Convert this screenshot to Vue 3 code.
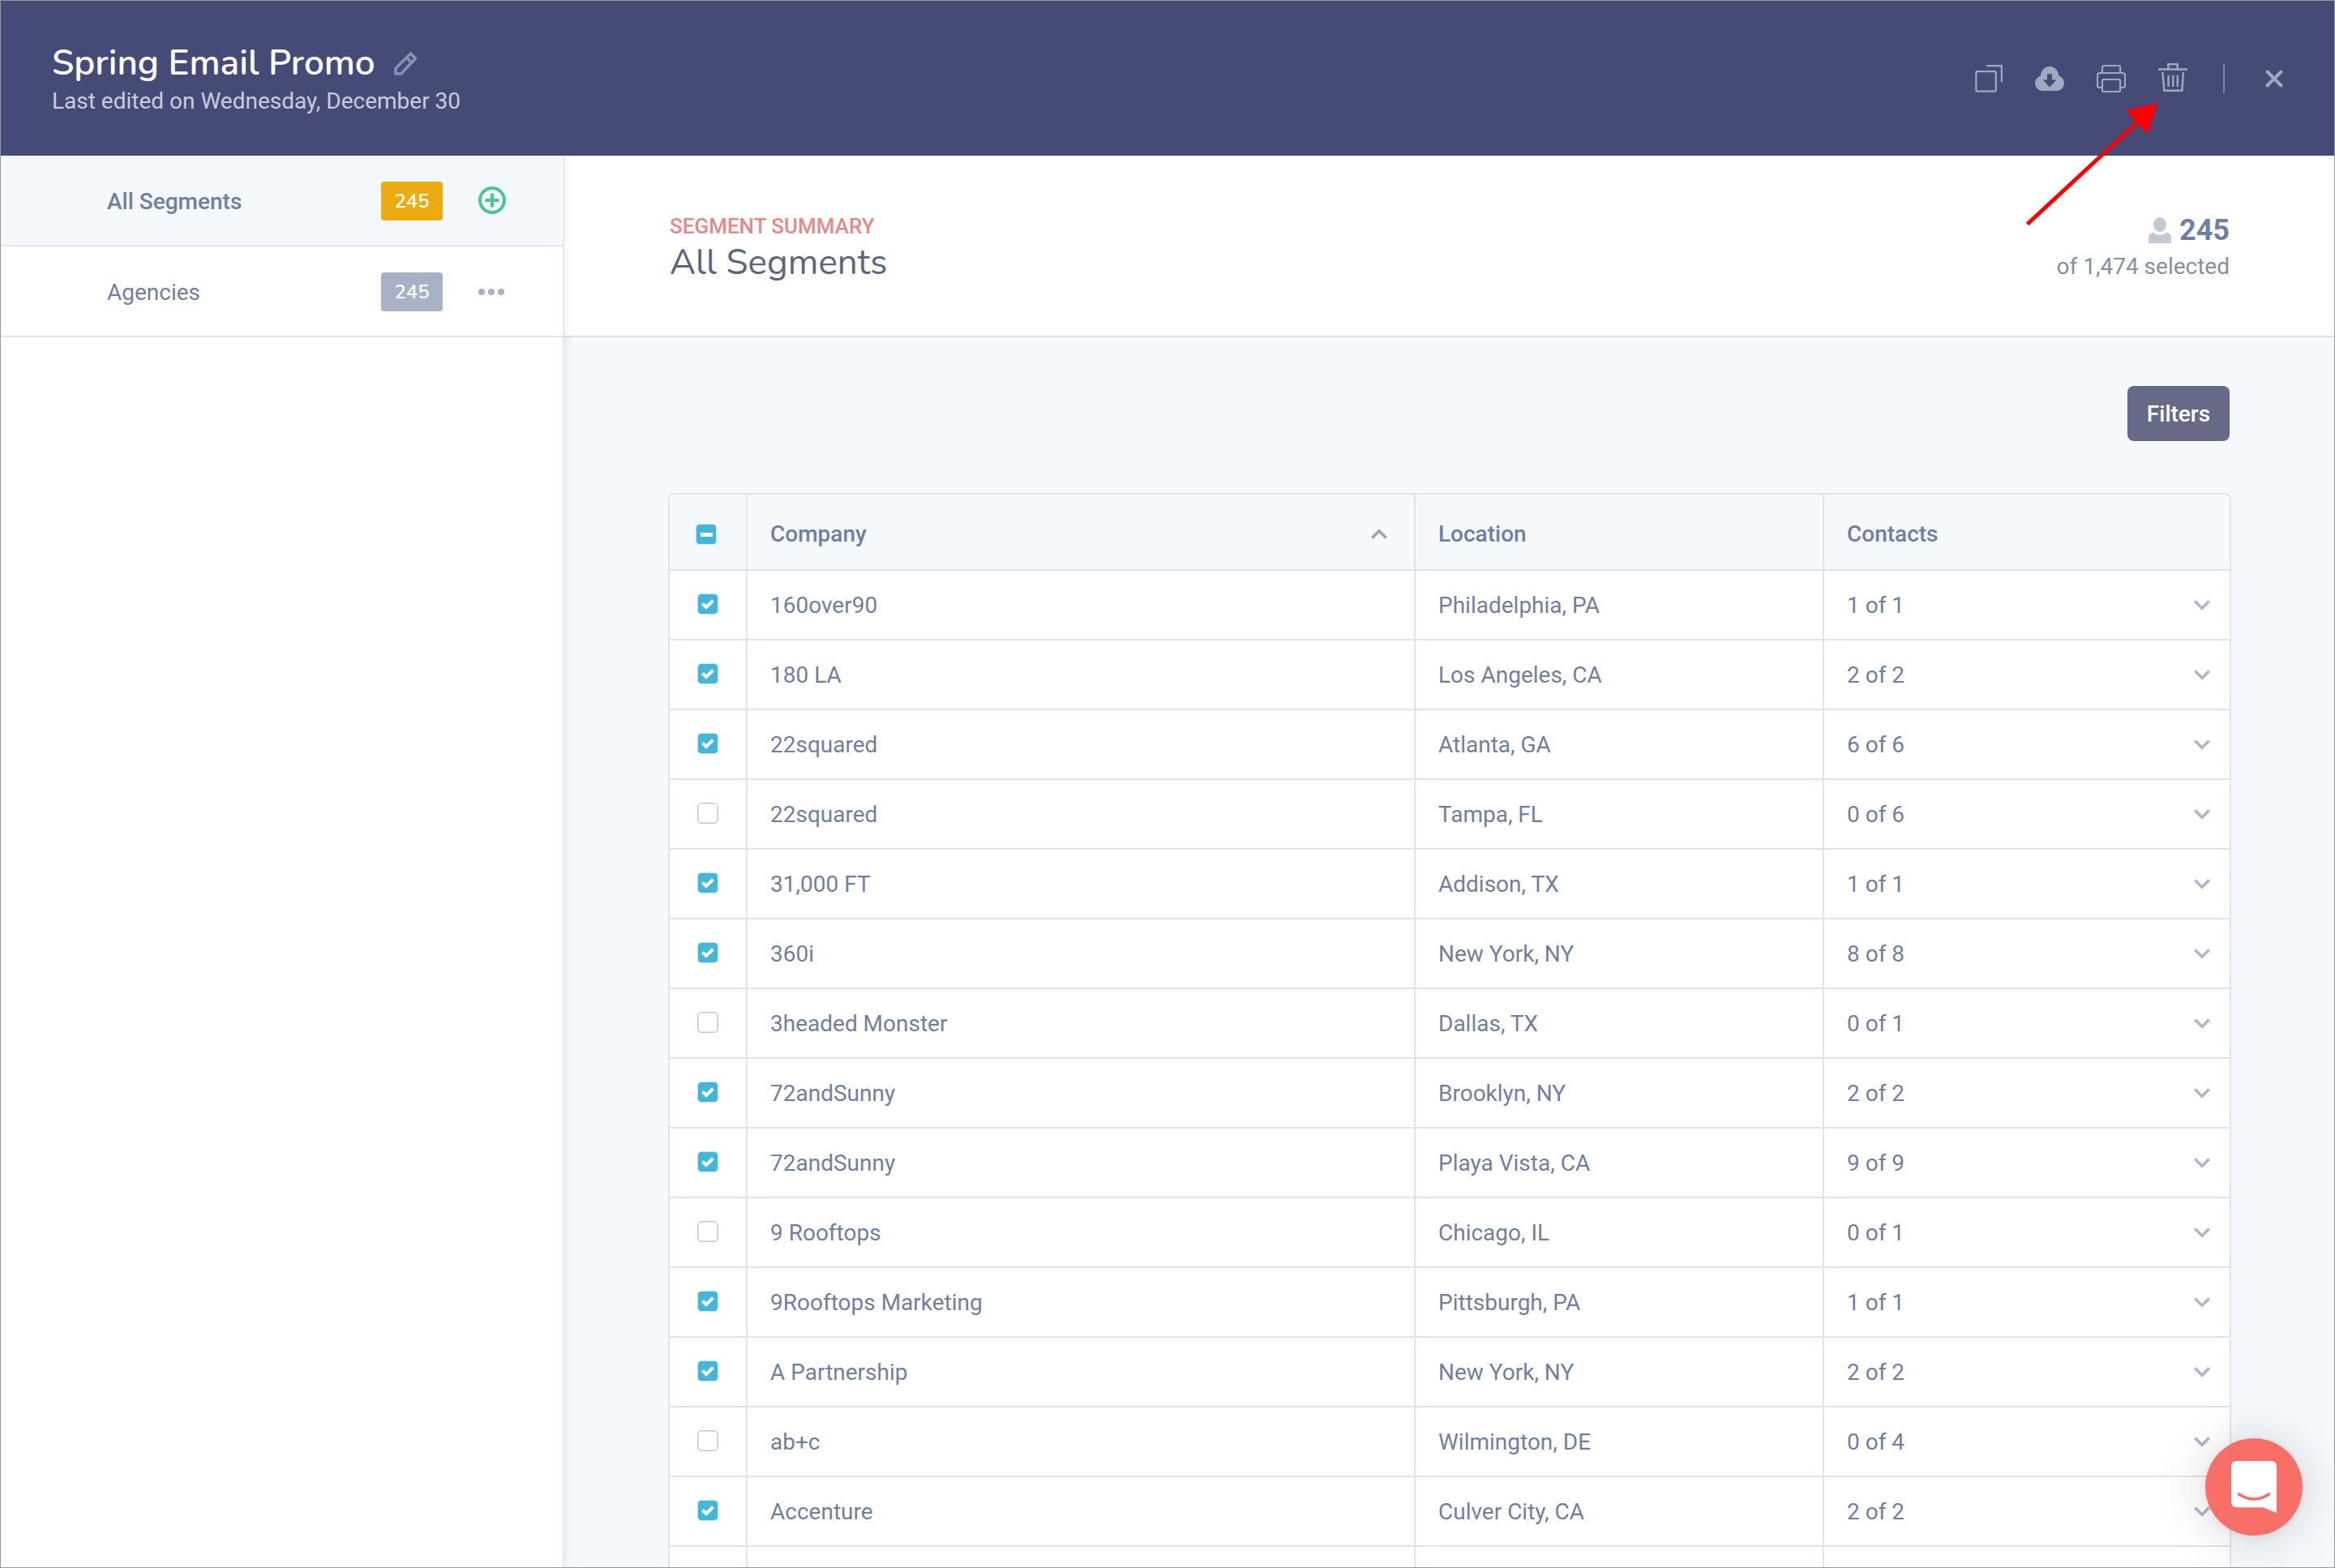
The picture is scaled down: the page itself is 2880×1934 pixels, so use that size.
<script setup>
const rows = [
  { on: true, company: '160over90', location: 'Philadelphia, PA', contacts: '1 of 1' },
  { on: true, company: '180 LA', location: 'Los Angeles, CA', contacts: '2 of 2' },
  { on: true, company: '22squared', location: 'Atlanta, GA', contacts: '6 of 6' },
  { on: false, company: '22squared', location: 'Tampa, FL', contacts: '0 of 6' },
  { on: true, company: '31,000 FT', location: 'Addison, TX', contacts: '1 of 1' },
  { on: true, company: '360i', location: 'New York, NY', contacts: '8 of 8' },
  { on: false, company: '3headed Monster', location: 'Dallas, TX', contacts: '0 of 1' },
  { on: true, company: '72andSunny', location: 'Brooklyn, NY', contacts: '2 of 2' },
  { on: true, company: '72andSunny', location: 'Playa Vista, CA', contacts: '9 of 9' },
  { on: false, company: '9 Rooftops', location: 'Chicago, IL', contacts: '0 of 1' },
  { on: true, company: '9Rooftops Marketing', location: 'Pittsburgh, PA', contacts: '1 of 1' },
  { on: true, company: 'A Partnership', location: 'New York, NY', contacts: '2 of 2' },
  { on: false, company: 'ab+c', location: 'Wilmington, DE', contacts: '0 of 4' },
  { on: true, company: 'Accenture', location: 'Culver City, CA', contacts: '2 of 2' },
]
</script>

<template>
  <div class="app">
    <header class="topbar">
      <div class="heading">
        <div class="title-row">
          <h1>Spring Email Promo</h1>
          <svg class="pencil" width="30" height="30" viewBox="0 0 30 30" fill="none" stroke="#8791b1" stroke-width="3.600" stroke-linejoin="round">
            <path d="M2 28V21.300L20.500 3L26.500 9L8.700 28ZM15.500 8L21.500 14" />
          </svg>
        </div>
        <p class="edited">Last edited on Wednesday, December 30</p>
      </div>
      <div class="tools">
        <svg width="34" height="36" viewBox="0 0 34 36" fill="none" stroke="#a0a9c0" stroke-width="2.200" stroke-linejoin="round" stroke-linecap="round">
          <rect x="1.400" y="9.200" width="24.400" height="24.400" rx="1" />
          <path d="M14.800 2.200H32.900V21.600" />
        </svg>
        <svg width="36" height="36" viewBox="0 0 36 36">
          <path fill="#a0a9c0" d="M9 33A9 9 0 0 1 0 24C0 19.500 3 15.500 7 14.500A11 11.500 0 0 1 29 14.500C33 15.500 36 19.500 36 24A9 9 0 0 1 27 33Z" />
          <path fill="#454b76" d="M15 12.300H21V19.500H26.300L18 28.500L9.700 19.500H15Z" />
        </svg>
        <svg width="36" height="36" viewBox="0 0 36 36" fill="none" stroke="#a0a9c0" stroke-width="2.100" stroke-linejoin="round">
          <path d="M7 10V4Q7 2 9 2H27Q29 2 29 4V10" />
          <path d="M7 29H3Q1 29 1 27V14Q1 11 4 11H32Q35 11 35 14V27Q35 29 33 29H29" />
          <rect x="7" y="19" width="22" height="15" rx="1.500" />
        </svg>
        <svg class="trash" width="36" height="36" viewBox="0 0 36 36" fill="none" stroke="#a0a9c0" stroke-width="2.400">
          <path d="M0 6.500H36M12.300 6V0.200H23.700V6M5.400 10L7.300 32.800H29.400L30.900 10M12.600 13.700V28M18.200 13.700V28M23.800 13.700V28" />
        </svg>
        <span class="rule"></span>
        <svg class="close" width="22" height="22" viewBox="0 0 22 22" stroke="#a0a9c0" stroke-width="4" stroke-linecap="round">
          <path d="M2.500 2.500L19.500 19.500M19.500 2.500L2.500 19.500" />
        </svg>
      </div>
    </header>

    <div class="body">
      <aside class="sidebar">
        <div class="segment active">
          <span class="segment-name">All Segments</span>
          <span class="badge gold">245</span>
          <svg class="action plus" width="34" height="34" viewBox="0 0 34 34" fill="none" stroke="#48c78e" stroke-width="4">
            <circle cx="17" cy="17" r="15" />
            <path d="M8.500 17H25.500M17 8.500V25.500" />
          </svg>
        </div>
        <div class="segment">
          <span class="segment-name">Agencies</span>
          <span class="badge">245</span>
          <svg class="action" width="34" height="8" viewBox="0 0 34 8" fill="#a9b1c6">
            <circle cx="4" cy="4" r="4" /><circle cx="16" cy="4" r="4" /><circle cx="28" cy="4" r="4" />
          </svg>
        </div>
      </aside>

      <main class="main">
        <section class="summary">
          <div>
            <div class="eyebrow">SEGMENT SUMMARY</div>
            <h2>All Segments</h2>
          </div>
          <div class="totals">
            <div class="count">
              <svg width="28" height="32" viewBox="0 0 28 32" fill="#c2c8d6">
                <ellipse cx="14" cy="9" rx="8" ry="9" />
                <path d="M0 32V25C0 21.500 2.500 19.500 6 18.500C10 23 18 23 22 18.500C25.500 19.500 28 21.500 28 25V32Z" />
              </svg>
              <b>245</b>
            </div>
            <div class="of">of 1,474 selected</div>
          </div>
        </section>

        <section class="content">
          <div class="bar"><button class="filters">Filters</button></div>
          <div class="table">
            <div class="row head">
              <div class="cell check"><span class="box on partial"><i></i></span></div>
              <div class="cell company">
                <span>Company</span>
                <svg class="sort" width="20" height="13" viewBox="0 0 20 13" fill="none" stroke="#99a3bd" stroke-width="3.600"><path d="M1.300 11.500L10 2.800L18.700 11.500" /></svg>
              </div>
              <div class="cell location">Location</div>
              <div class="cell contacts">Contacts</div>
            </div>
            <div v-for="(r, i) in rows" :key="i" class="row">
              <div class="cell check">
                <span class="box" :class="{ on: r.on }">
                  <svg v-if="r.on" width="16" height="13" viewBox="0 0 16 13" fill="none" stroke="#fff" stroke-width="4"><path d="M1.500 5.500L6 10L14.500 1.800" /></svg>
                </span>
              </div>
              <div class="cell company">{{ r.company }}</div>
              <div class="cell location">{{ r.location }}</div>
              <div class="cell contacts">
                <span>{{ r.contacts }}</span>
                <svg class="chevron" width="20" height="13" viewBox="0 0 20 13" fill="none" stroke="#aeb6ca" stroke-width="3.600"><path d="M1.300 1.500L10 10.200L18.700 1.500" /></svg>
              </div>
            </div>
            <div class="row">
              <div class="cell check"></div><div class="cell company"></div><div class="cell location"></div><div class="cell contacts"></div>
            </div>
          </div>
        </section>
      </main>
    </div>

    <svg class="arrow" width="180" height="170" viewBox="0 0 180 170">
      <path d="M20.500 156.500L156 31" stroke="#f00" stroke-width="5" />
      <path d="M181 7L142 16L169 45.500Z" fill="#f00" />
    </svg>

    <div class="launcher">
      <svg width="56" height="64" viewBox="0 0 56 64">
        <path fill="#fff" d="M7 0H49Q56 0 56 7V64L39 57.300H7Q0 57.300 0 50.300V7Q0 0 7 0Z" />
        <path d="M9.500 41Q28 53 46.500 41" fill="none" stroke="#f86f68" stroke-width="3.600" stroke-linecap="round" />
      </svg>
    </div>
  </div>
</template>

<style>
body {
  margin: 0;
  overflow: hidden;
}
</style>

<style scoped>
* {
  box-sizing: border-box;
}
.app {
  position: relative;
  width: 2880px;
  height: 1934px;
  overflow: hidden;
  display: flex;
  flex-direction: column;
  border: 1px solid #999;
  background: #fff;
  font-family: Roboto, sans-serif;
  font-size: 28px;
  color: #6f7fa3;
}
h1, h2, p {
  margin: 0;
  font-weight: 400;
}
.topbar {
  flex: none;
  height: 191px;
  background: #454b76;
  display: flex;
  justify-content: space-between;
  padding: 46px 63px 0 63px;
}
.title-row {
  display: flex;
  align-items: center;
  height: 60px;
}
h1 {
  width: 422px;
  padding-top: 1px;
  font-family: Nunito, "Open Sans", sans-serif;
  font-size: 44px;
  font-weight: 600;
  line-height: 60px;
  color: #fff;
  white-space: nowrap;
}
.pencil {
  margin-top: 1px;
}
.edited {
  padding-top: 1px;
  line-height: 34px;
  color: #c7cddd;
}
.tools {
  display: flex;
  align-items: center;
  height: 100px;
  gap: 40px;
}
.trash {
  overflow: visible;
}
.rule {
  width: 2px;
  height: 36px;
  margin-left: 4px;
  background: #7d84a2;
}
.close {
  margin-left: 10px;
}
.body {
  flex: 1;
  display: flex;
  min-height: 0;
}
.sidebar {
  position: relative;
  z-index: 1;
  width: 695px;
  border-right: 2px solid #e6e9f0;
  background: #fff;
  box-shadow: 2px 0 10px rgba(90, 100, 140, 0.1);
  clip-path: inset(0 -20px 0 0);
}
.segment {
  display: flex;
  align-items: center;
  height: 112px;
  padding-left: 131px;
  border-bottom: 2px solid #e1e5ed;
}
.segment.active {
  background: #f4f7fc;
  font-weight: 500;
}
.segment-name {
  width: 338px;
  padding-top: 2px;
}
.badge {
  width: 76px;
  height: 48px;
  margin-top: 2px;
  border-radius: 4px;
  background: #a9b1c6;
  color: #fff;
  font: 600 24px/48px Nunito, "Open Sans", sans-serif;
  text-align: center;
}
.badge.gold {
  background: #edab12;
}
.action {
  margin-left: 44px;
  margin-top: 2px;
}
.action.plus {
  margin-top: 0;
}
.main {
  flex: 1;
  display: flex;
  flex-direction: column;
  min-width: 0;
}
.summary {
  flex: none;
  height: 224px;
  display: flex;
  justify-content: space-between;
  padding: 70px 129px 0 130px;
  border-bottom: 2px solid #d9dfe4;
}
.eyebrow {
  font-size: 26px;
  font-weight: 500;
  line-height: 34px;
  color: #e78985;
}
h2 {
  font-family: Nunito, "Open Sans", sans-serif;
  font-size: 44px;
  line-height: 56px;
  color: #56687f;
}
.totals {
  text-align: right;
  line-height: 46px;
}
.count {
  display: flex;
  justify-content: flex-end;
  align-items: center;
  gap: 10px;
  height: 44px;
  font-size: 36px;
}
.count b {
  font-weight: 700;
}
.of {
  color: #82919f;
}
.content {
  flex: 1;
  min-height: 0;
  background: #f5f8fd;
  padding: 60px 127px 0 128px;
}
.bar {
  display: flex;
  justify-content: flex-end;
  padding-right: 2px;
  margin-bottom: 64px;
}
.filters {
  width: 126px;
  height: 68px;
  padding: 0;
  border: 0;
  border-radius: 8px;
  background: #666a86;
  color: #fff;
  font: 500 28px Roboto, sans-serif;
}
.table {
  border: 2px solid #dfe3ea;
  border-radius: 8px 8px 0 0;
  overflow: hidden;
  background: #fff;
}
.row {
  display: grid;
  grid-template-columns: 96px 824px 504px 500px;
  height: 86px;
  border-bottom: 2px solid #dfe3ea;
}
.head {
  height: 94px;
  background: #f5f9fc;
  font-weight: 500;
}
.cell {
  display: flex;
  align-items: center;
  border-right: 2px solid #dfe3ea;
  padding-left: 28px;
}
.cell:last-child {
  border-right: 0;
}
.check {
  padding: 0 0 0 34px;
}
.head .check {
  padding: 8px 0 0 32px;
}
.box {
  display: flex;
  align-items: center;
  justify-content: center;
  width: 26px;
  height: 26px;
  margin-bottom: 2px;
  border: 1px solid #c0c7d7;
  border-radius: 5px;
  box-shadow: inset 0 0 0 1px #dfe3eb;
}
.box.on {
  border-color: #c8e9f3;
  background: #42b7d9;
  box-shadow: none;
}
.partial i {
  width: 15px;
  height: 5px;
  background: #fff;
}
.sort {
  margin-left: auto;
  margin-right: 33px;
  margin-top: 1px;
}
.chevron {
  margin-left: auto;
  margin-right: 24px;
}
.head .cell:not(.check) {
  padding-top: 4px;
}
.arrow {
  position: absolute;
  left: 2479px;
  top: 119px;
  z-index: 2;
  overflow: visible;
}
.launcher {
  position: absolute;
  left: 2719px;
  top: 1773px;
  z-index: 3;
  width: 120px;
  height: 120px;
  border-radius: 50%;
  background: #f86f68;
  display: flex;
  align-items: center;
  justify-content: center;
  box-shadow: 0 2px 12px rgba(0, 0, 0, 0.06), 0 4px 64px rgba(0, 0, 0, 0.16);
}
</style>
